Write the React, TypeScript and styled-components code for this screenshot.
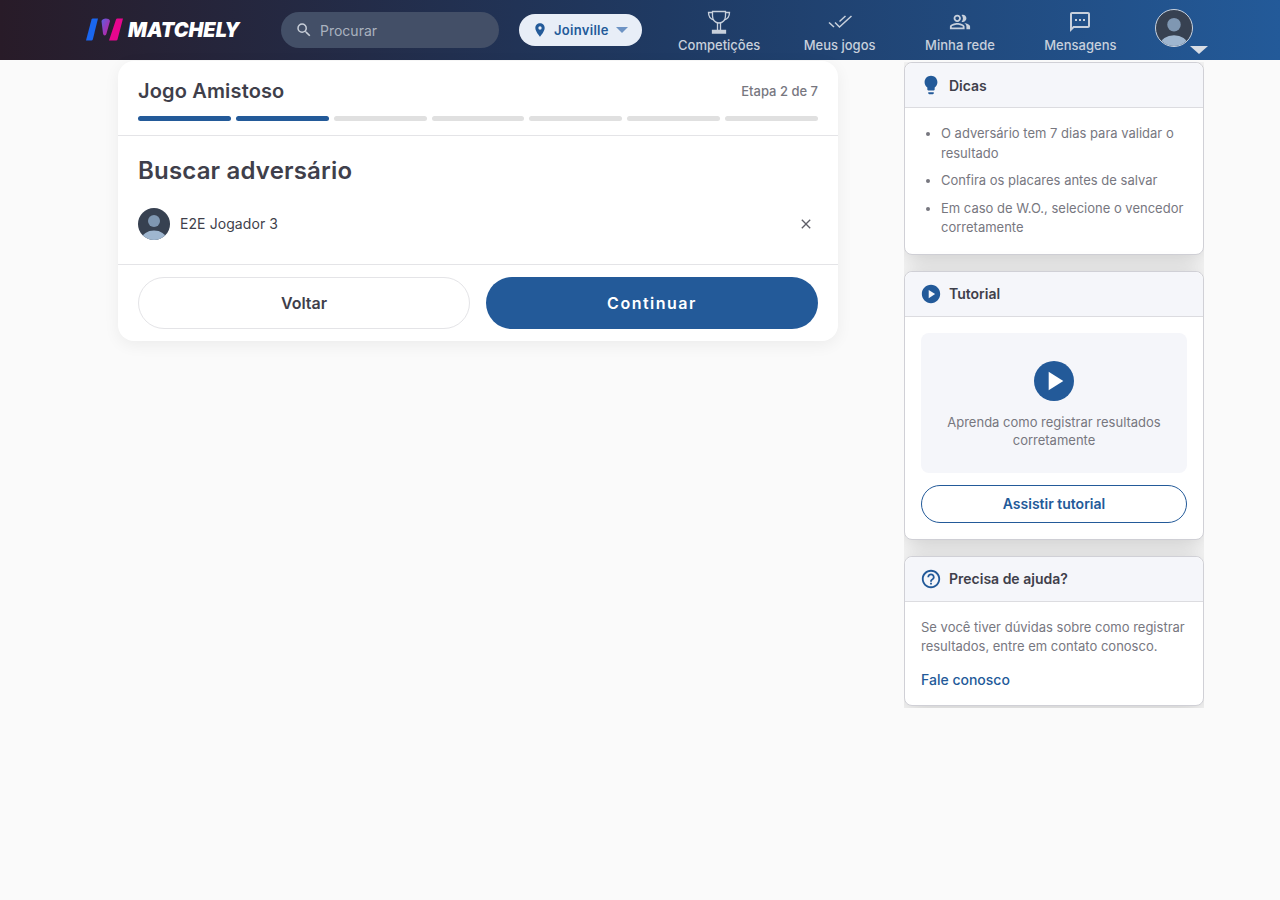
import React from 'react'
import styled, { createGlobalStyle } from 'styled-components'
import {
  MdSearch,
  MdLocationOn,
  MdOutlinePeopleAlt,
  MdOutlineSms,
  MdLightbulb,
  MdPlayCircle,
  MdPlayArrow,
  MdHelpOutline,
  MdClose,
} from 'react-icons/md'

const BLUE = '#235a99'
const INK = '#3f3f4b'
const MUTED = '#77777f'

const Global = createGlobalStyle`
  html, body { margin: 0; padding: 0; height: 100%; background: #fafafa; }
  body { font-family: Inter, "Liberation Sans", sans-serif; color: ${INK}; }
  * { box-sizing: border-box; }
`

const Trophy = () => (
  <svg width="24" height="24" viewBox="0 0 24 24" fill="none" stroke="currentColor" strokeWidth="1.3">
    <path d="M5.500 1.500h13v4.500c0 4-2.800 7-6.500 7s-6.500-3-6.500-7z" />
    <path d="M5.500 2.500H1.500c0 4 1.500 6.500 5.500 7.500M18.500 2.500h4c0 4-1.500 6.500-5.500 7.500" />
    <path d="M10.500 13v7M13.500 13v7" />
    <path d="M5.500 20.500h13v2.500h-13z" fill="currentColor" />
  </svg>
)

const DoubleCheck = () => (
  <svg width="24" height="24" viewBox="0 0 24 24" fill="none" stroke="currentColor" strokeWidth="1.5">
    <path d="M1 12.500l5 4.500" />
    <path d="M7 12.500l4.500 4.500L23.500 6" />
    <path d="M11.500 11.500L17.500 6" />
  </svg>
)

const Avatar = ({ size, ring }: { size: number; ring?: boolean }) => (
  <AvatarShape $size={size} $ring={ring}>
    <svg width="100%" height="100%" viewBox="0 0 32 32">
      <circle cx="16" cy="13" r="6" fill="#7f97b2" />
      <ellipse cx="16" cy="31" rx="12" ry="8.500" fill="#9fb6cf" />
    </svg>
  </AvatarShape>
)

const steps = [true, true, false, false, false, false, false]
const navItems = [
  { label: 'Competições', icon: <Trophy /> },
  { label: 'Meus jogos', icon: <DoubleCheck /> },
  { label: 'Minha rede', icon: <MdOutlinePeopleAlt size={22} /> },
  { label: 'Mensagens', icon: <MdOutlineSms size={24} /> },
]

const App: React.FC = () => {
  return (
    <>
      <Global />
      <Header>
        <Logo>
          <svg width="38" height="24" viewBox="0 0 38 24">
            <defs>
              <linearGradient id="bar" x1="0" y1="0" x2="1" y2="1">
                <stop offset="0" stopColor="#5a5fe0" />
                <stop offset="1" stopColor="#d0189a" />
              </linearGradient>
            </defs>
            <path d="M6.500 1.500c.2-.7.700-1 1.300-1h5.200L7.800 21.500c-.2.700-.7 1-1.300 1H1z" fill="#1a66f0" />
            <path d="M16.500 3c.8-3 7.500-3.500 8.500 0l-3.500 12.500c-.5 2.500-3 2.500-3.500 0z" fill="url(#bar)" />
            <path d="M31 1.500c.2-.7.700-1 1.300-1h5.700l-5.500 21c-.2.700-.7 1-1.300 1H24z" fill="#e6068e" />
          </svg>
          <LogoText>MATCHELY</LogoText>
        </Logo>
        <Search>
          <MdSearch size={18} color="#c8ced8" />
          <span>Procurar</span>
        </Search>
        <CityPill>
          <MdLocationOn size={16} />
          <span>Joinville</span>
          <Caret $color="#6d93c4" $w={6} $h={6} />
        </CityPill>
        <Nav>
          {navItems.map(item => (
            <NavItem key={item.label}>
              <NavIcon>{item.icon}</NavIcon>
              <span>{item.label}</span>
            </NavItem>
          ))}
        </Nav>
        <Profile>
          <Avatar size={38} ring />
          <ProfileCaret />
        </Profile>
      </Header>
      <Main>
        <WizardCard>
          <WizardHead>
            <TitleRow>
              <WizardTitle>Jogo Amistoso</WizardTitle>
              <StepLabel>Etapa 2 de 7</StepLabel>
            </TitleRow>
            <Steps>
              {steps.map((on, i) => (
                <Step key={i} $on={on} />
              ))}
            </Steps>
          </WizardHead>
          <WizardBody>
            <Heading>Buscar adversário</Heading>
            <PlayerRow>
              <Avatar size={32} />
              <PlayerName>E2E Jogador 3</PlayerName>
              <MdClose size={16} color="#5f5f68" />
            </PlayerRow>
          </WizardBody>
          <WizardFoot>
            <BackButton>Voltar</BackButton>
            <NextButton>Continuar</NextButton>
          </WizardFoot>
        </WizardCard>
        <Sidebar>
          <SideCard>
            <SideHead>
              <MdLightbulb size={22} color={BLUE} />
              <SideTitle>Dicas</SideTitle>
            </SideHead>
            <TipList>
              <li>O adversário tem 7 dias para validar o resultado</li>
              <li>Confira os placares antes de salvar</li>
              <li>Em caso de W.O., selecione o vencedor corretamente</li>
            </TipList>
          </SideCard>
          <SideCard>
            <SideHead>
              <MdPlayCircle size={22} color={BLUE} />
              <SideTitle>Tutorial</SideTitle>
            </SideHead>
            <SideBody>
              <VideoBox>
                <PlayDisc>
                  <MdPlayArrow size={32} color="#fff" />
                </PlayDisc>
                <VideoText>Aprenda como registrar resultados corretamente</VideoText>
              </VideoBox>
              <WatchButton>Assistir tutorial</WatchButton>
            </SideBody>
          </SideCard>
          <SideCard>
            <SideHead>
              <MdHelpOutline size={22} color={BLUE} />
              <SideTitle>Precisa de ajuda?</SideTitle>
            </SideHead>
            <SideBody>
              <HelpText>Se você tiver dúvidas sobre como registrar resultados, entre em contato conosco.</HelpText>
              <HelpLink href="#">Fale conosco</HelpLink>
            </SideBody>
          </SideCard>
        </Sidebar>
      </Main>
    </>
  )
}

const Header = styled.header`
  height: 60px;
  padding-left: 85px;
  display: flex;
  align-items: center;
  background: linear-gradient(90deg, #281b28 0%, #1f3a63 52%, ${BLUE} 100%);
`
const Logo = styled.div`
  width: 196px;
  display: flex;
  align-items: center;
  gap: 5px;
`
const LogoText = styled.span`
  font-size: 19.800px;
  font-weight: 900;
  font-style: italic;
  color: #fff;
`
const Search = styled.div`
  width: 218px;
  height: 36px;
  padding-left: 14px;
  display: flex;
  align-items: center;
  gap: 7px;
  border-radius: 18px;
  background: #434f67;
  font-size: 14px;
  color: #aab2bf;
`
const CityPill = styled.div`
  width: 123px;
  height: 32px;
  margin-left: 20px;
  padding-left: 13px;
  display: flex;
  align-items: center;
  gap: 6px;
  border-radius: 16px;
  background: #e8eef7;
  color: ${BLUE};
  font-size: 13px;
  font-weight: 600;
  letter-spacing: 0.3px;
`
const Caret = styled.span<{ $color: string; $w: number; $h: number }>`
  margin-left: 1px;
  border-left: ${p => p.$w}px solid transparent;
  border-right: ${p => p.$w}px solid transparent;
  border-top: ${p => p.$h}px solid ${p => p.$color};
`
const Nav = styled.nav`
  margin-left: 17px;
  display: flex;
`
const NavItem = styled.a`
  width: 120.400px;
  display: flex;
  flex-direction: column;
  align-items: center;
  font-size: 13px;
  font-weight: 500;
  line-height: 16px;
  color: #c8d0dc;
`
const NavIcon = styled.div`
  height: 30px;
  display: flex;
  align-items: center;
  justify-content: center;
`
const Profile = styled.div`
  position: relative;
  margin: -4px 0 0 14.400px;
`
const ProfileCaret = styled.span`
  position: absolute;
  left: 35px;
  top: 37px;
  border-left: 9px solid transparent;
  border-right: 9px solid transparent;
  border-top: 8px solid #d8dde5;
`
const AvatarShape = styled.div<{ $size: number; $ring?: boolean }>`
  width: ${p => p.$size}px;
  height: ${p => p.$size}px;
  flex: none;
  border-radius: 50%;
  overflow: hidden;
  background: #374151;
  border: ${p => (p.$ring ? '1px solid #c9d3e0' : 'none')};
`
const Main = styled.main`
  padding-left: 118px;
  display: flex;
  align-items: flex-start;
  gap: 66px;
`
const WizardCard = styled.section`
  width: 720px;
  margin-top: 1px;
  border-radius: 16px;
  background: #fff;
  box-shadow: 0 4px 16px rgba(0, 0, 0, 0.06);
`
const WizardHead = styled.div`
  height: 75px;
  padding: 16px 20px 0;
  border-bottom: 1px solid #e4e4e7;
`
const TitleRow = styled.div`
  height: 28px;
  display: flex;
  align-items: center;
  justify-content: space-between;
`
const WizardTitle = styled.h1`
  margin: 0;
  font-size: 20px;
  font-weight: 600;
  letter-spacing: 0.15px;
`
const StepLabel = styled.span`
  font-size: 13px;
  font-weight: 500;
  color: ${MUTED};
`
const Steps = styled.div`
  margin-top: 11px;
  display: grid;
  grid-template-columns: repeat(7, 1fr);
  gap: 5px;
`
const Step = styled.div<{ $on: boolean }>`
  height: 5px;
  border-radius: 3px;
  background: ${p => (p.$on ? BLUE : '#e0e0e0')};
`
const WizardBody = styled.div`
  height: 129px;
  padding: 20px 20px 0;
  border-bottom: 1px solid #e4e4e7;
`
const Heading = styled.h2`
  margin: 0;
  font-size: 24px;
  line-height: 30px;
  font-weight: 600;
  letter-spacing: 0.18px;
`
const PlayerRow = styled.div`
  margin-top: 22px;
  padding-right: 4px;
  display: flex;
  align-items: center;
  gap: 10px;
`
const PlayerName = styled.span`
  flex: 1;
  margin-top: -2px;
  font-size: 14px;
  letter-spacing: 0.08px;
`
const WizardFoot = styled.div`
  padding: 12px 20px;
  display: grid;
  grid-template-columns: 1fr 1fr;
  gap: 16px;
`
const BackButton = styled.button`
  height: 52px;
  border: 1px solid #e4e4e7;
  border-radius: 26px;
  background: #fff;
  color: ${INK};
  font: 600 16px Inter, sans-serif;
`
const NextButton = styled.button`
  height: 52px;
  border: none;
  border-radius: 26px;
  background: ${BLUE};
  color: #fff;
  font: 600 16px Inter, sans-serif;
  letter-spacing: 1.5px;
`
const Sidebar = styled.aside`
  width: 300px;
  height: 646px;
  margin-top: 2px;
  display: flex;
  flex-direction: column;
  gap: 16px;
  overflow: hidden;
`
const SideCard = styled.section`
  border: 1px solid #d0d0d6;
  border-radius: 8px;
  background: #fff;
  box-shadow: 0 4px 24px rgba(0, 0, 0, 0.2);
`
const SideHead = styled.div`
  height: 45px;
  padding-left: 15px;
  display: flex;
  align-items: center;
  gap: 7px;
  border-radius: 8px 8px 0 0;
  border-bottom: 1px solid #dcdce0;
  background: #f5f6fa;
`
const SideTitle = styled.h3`
  margin: 0;
  font-size: 14px;
  font-weight: 600;
`
const SideBody = styled.div`
  padding: 16px;
`
const TipList = styled.ul`
  margin: 0;
  padding: 16px 16px 16px 36px;
  font-size: 13px;
  line-height: 19.500px;
  color: ${MUTED};
  li + li { margin-top: 8px; }
`
const VideoBox = styled.div`
  height: 140px;
  padding-top: 28px;
  display: flex;
  flex-direction: column;
  align-items: center;
  border-radius: 8px;
  background: #f5f6fa;
`
const PlayDisc = styled.div`
  width: 40px;
  height: 40px;
  display: flex;
  align-items: center;
  justify-content: center;
  border-radius: 50%;
  background: ${BLUE};
`
const VideoText = styled.p`
  margin: 12px 16px 0;
  text-align: center;
  font-size: 13px;
  line-height: 18.500px;
  color: ${MUTED};
`
const WatchButton = styled.button`
  width: 100%;
  height: 38px;
  margin-top: 12px;
  border: 1px solid ${BLUE};
  border-radius: 19px;
  background: #fff;
  color: ${BLUE};
  font: 600 14px Inter, sans-serif;
`
const HelpText = styled.p`
  margin: 0;
  font-size: 13px;
  line-height: 19.500px;
  color: ${MUTED};
`
const HelpLink = styled.a`
  display: block;
  margin: 14px 0 1px;
  font-size: 14px;
  font-weight: 500;
  line-height: 17px;
  color: ${BLUE};
  text-decoration: none;
`

export default App
